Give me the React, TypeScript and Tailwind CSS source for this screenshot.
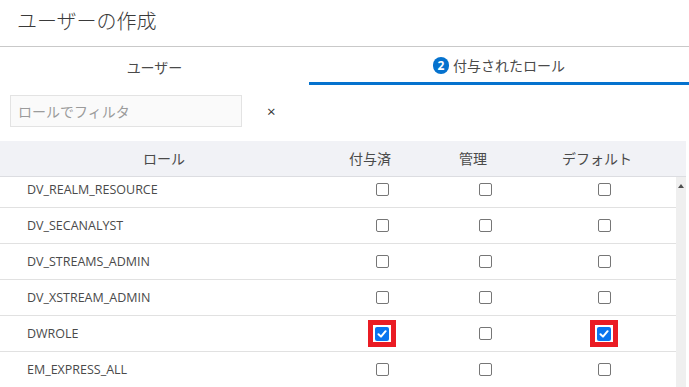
const ROLES = [
  { name: 'DV_REALM_RESOURCE', granted: false, admin: false, def: false },
  { name: 'DV_SECANALYST', granted: false, admin: false, def: false },
  { name: 'DV_STREAMS_ADMIN', granted: false, admin: false, def: false },
  { name: 'DV_XSTREAM_ADMIN', granted: false, admin: false, def: false },
  { name: 'DWROLE', granted: true, admin: false, def: true },
  { name: 'EM_EXPRESS_ALL', granted: false, admin: false, def: false },
];

const FONT = { fontFamily: '"Open Sans", "Noto Sans CJK JP", sans-serif' };

function Check({ checked, marked }: { checked: boolean; marked?: boolean }) {
  const box = checked ? (
    <div className="w-[14px] h-[14px] rounded-[2px] bg-[#0a74ee] flex items-center justify-center">
      <svg width="10" height="10" viewBox="0 0 10 10">
        <path d="M1.5 5.2 L4 7.6 L8.6 2.2" stroke="#fff" strokeWidth="2" fill="none" strokeLinecap="round" strokeLinejoin="round" />
      </svg>
    </div>
  ) : (
    <div className="w-[13px] h-[13px] rounded-[2px] border border-[#767676] bg-white" />
  );
  if (!marked) return box;
  return (
    <div className="w-[28px] h-[27px] border-[5px] border-[#ea1c24] bg-white flex items-center justify-center">
      {box}
    </div>
  );
}

export default function App() {
  return (
    <div className="w-[689px] h-[387px] overflow-hidden bg-white text-[#333]" style={FONT}>
      {/* Title */}
      <div className="h-[47px] pl-[17px] flex items-center border-b border-[#c9c9c9]">
        <h1 className="text-[20px] font-light text-[#3a3a3a] -mt-[2px]">ユーザーの作成</h1>
      </div>

      {/* Tabs */}
      <div className="flex h-[38px]">
        <div className="w-[309px] flex items-center justify-center pt-[2px] text-[14px] text-[#4a4a4a]">ユーザー</div>
        <div className="flex-1 flex items-center justify-center pt-[2px] border-b-[3px] border-[#0572ce] text-[14px] text-[#4a4a4a]">
          <span className="w-[16px] h-[17px] rounded-full bg-[#0572ce] text-white text-[12px] font-bold flex items-center justify-center mr-[4px]">2</span>
          付与されたロール
        </div>
      </div>

      {/* Filter */}
      <div className="flex items-center mt-[10px] h-[32px]">
        <div className="ml-[10px] w-[232px] h-[32px] border border-[#e3e3e3] bg-[#fafafa] flex items-center pl-[7px] text-[14px] text-[#9b9b9b]">
          ロールでフィルタ
        </div>
        <span className="ml-[25px] text-[15px] text-[#333]">×</span>
      </div>

      {/* Header */}
      <div className="mt-[14px] w-[686px] h-[36px] bg-[#f1f2f6] border-b border-[#dcdde1] flex items-center text-[14px] text-[#4a4a4a]">
        <div className="w-[328px] text-center">ロール</div>
        <div className="w-[84px] text-center">付与済</div>
        <div className="w-[122px] text-center">管理</div>
        <div className="w-[126px] text-center">デフォルト</div>
      </div>

      {/* Body */}
      <div className="flex h-[210px]">
        <div className="w-[676px] overflow-hidden">
          <div className="-mt-[5px]">
            {ROLES.map((r) => (
              <div key={r.name} className="h-[36px] flex items-center border-b border-[#e1e1e1] text-[12.5px] text-[#4a4a4a]">
                <div className="w-[328px] pl-[27px] pt-[2px]">{r.name}</div>
                <div className="w-[108px] flex justify-center"><Check checked={r.granted} marked={r.granted} /></div>
                <div className="w-[98px] flex justify-center"><Check checked={r.admin} /></div>
                <div className="w-[140px] flex justify-center"><Check checked={r.def} marked={r.def} /></div>
              </div>
            ))}
          </div>
        </div>
        <div className="w-[10px] bg-[#efefef] flex justify-center pt-[7px]">
          <svg width="6" height="4" viewBox="0 0 6 4"><path d="M3 0 L6 4 L0 4 Z" fill="#505050" /></svg>
        </div>
      </div>
    </div>
  );
}
